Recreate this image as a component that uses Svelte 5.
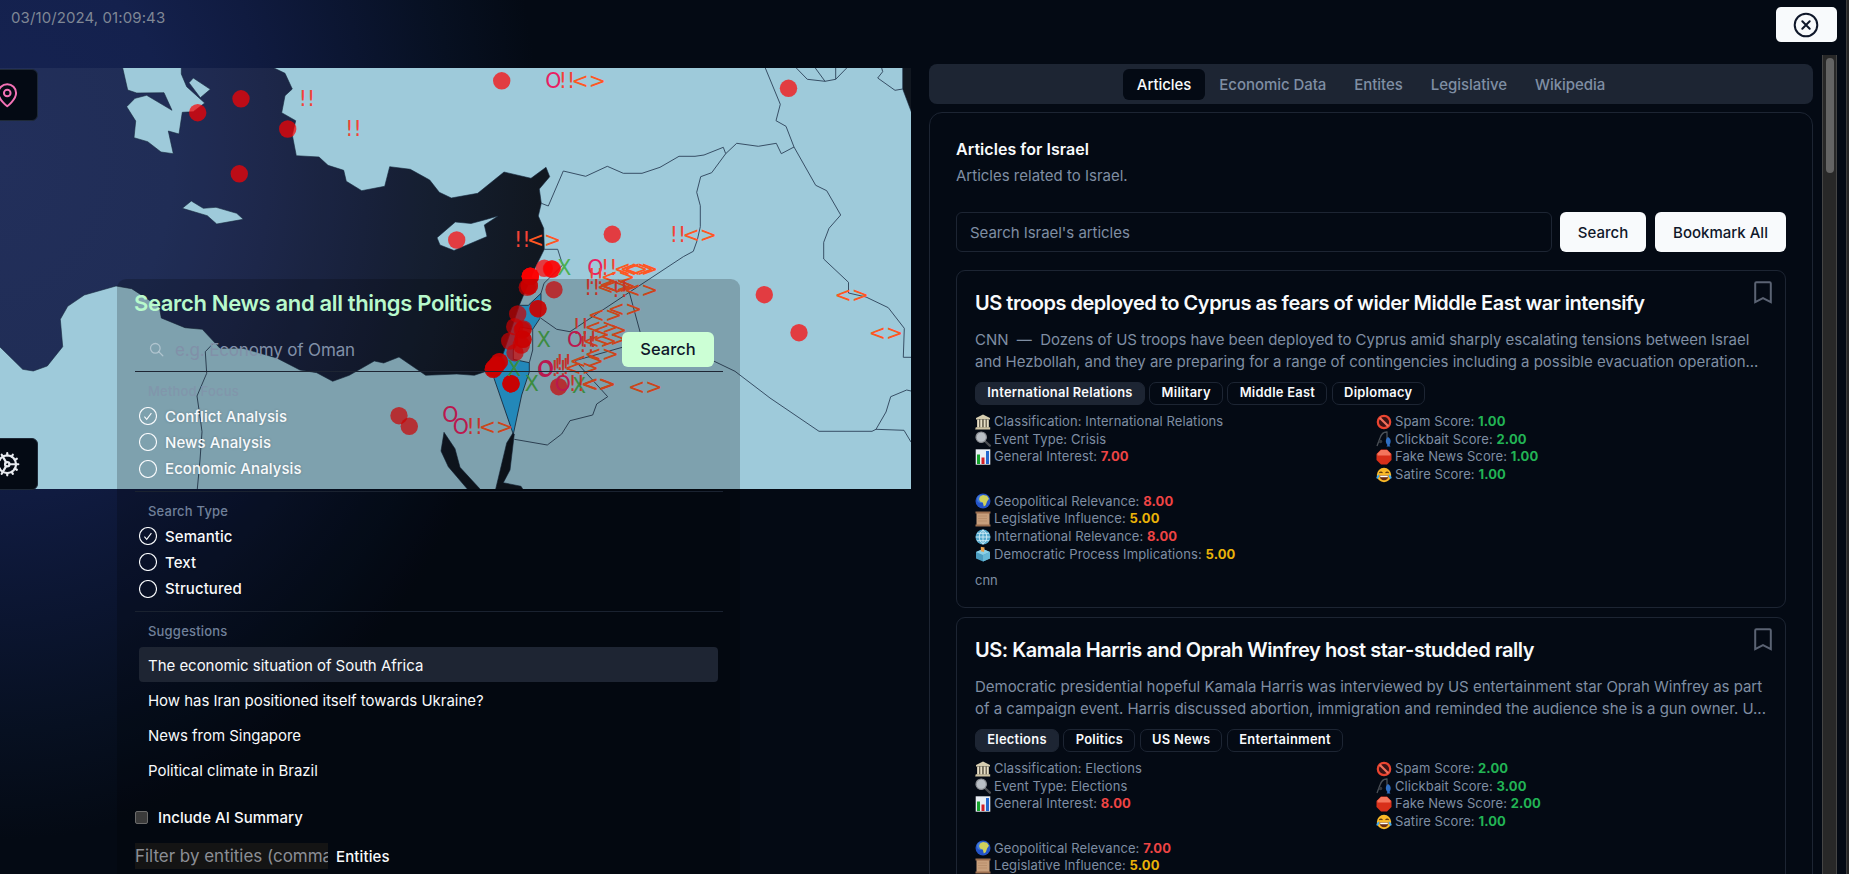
<script>
  const tabs = ['Articles', 'Economic Data', 'Entites', 'Legislative', 'Wikipedia'];
  const methods = ['Conflict Analysis', 'News Analysis', 'Economic Analysis'];
  const types = ['Semantic', 'Text', 'Structured'];
  const suggestions = [
    'The economic situation of South Africa',
    'How has Iran positioned itself towards Ukraine?',
    'News from Singapore',
    'Political climate in Brazil'
  ];

  const articles = [
    {
      title: 'US troops deployed to Cyprus as fears of wider Middle East war intensify',
      lines: [
        'CNN \u00a0—\u00a0 Dozens of US troops have been deployed to Cyprus amid sharply escalating tensions between Israel',
        'and Hezbollah, and they are preparing for a range of contingencies including a possible evacuation operation...'
      ],
      tags: ['International Relations', 'Military', 'Middle East', 'Diplomacy'],
      left: [['bank', 'Classification: International Relations'], ['lens', 'Event Type: Crisis'], ['chart', 'General Interest:', '7.00', 'red']],
      right: [['no', 'Spam Score:', '1.00', 'green'], ['rod', 'Clickbait Score:', '2.00', 'green'], ['stop', 'Fake News Score:', '1.00', 'green'], ['joy', 'Satire Score:', '1.00', 'green']],
      impact: [['earth', 'Geopolitical Relevance:', '8.00', 'red'], ['scroll', 'Legislative Influence:', '5.00', 'amber'], ['globe', 'International Relevance:', '8.00', 'red'], ['ballot', 'Democratic Process Implications:', '5.00', 'amber']],
      source: 'cnn'
    },
    {
      title: 'US: Kamala Harris and Oprah Winfrey host star-studded rally',
      lines: [
        'Democratic presidential hopeful Kamala Harris was interviewed by US entertainment star Oprah Winfrey as part',
        'of a campaign event. Harris discussed abortion, immigration and reminded the audience she is a gun owner. U...'
      ],
      tags: ['Elections', 'Politics', 'US News', 'Entertainment'],
      left: [['bank', 'Classification: Elections'], ['lens', 'Event Type: Elections'], ['chart', 'General Interest:', '8.00', 'red']],
      right: [['no', 'Spam Score:', '2.00', 'green'], ['rod', 'Clickbait Score:', '3.00', 'green'], ['stop', 'Fake News Score:', '2.00', 'green'], ['joy', 'Satire Score:', '1.00', 'green']],
      impact: [['earth', 'Geopolitical Relevance:', '7.00', 'red'], ['scroll', 'Legislative Influence:', '5.00', 'amber']],
      source: ''
    }
  ];

  const dots = [
    [241, 98.8], [197.7, 112.7], [287.7, 129], [239.3, 173.8], [501.7, 80.8], [788.5, 88.3], [456.7, 240], [612.3, 234.3],
    [544.3, 268.3], [552.3, 269], [551.5, 269], [530.3, 276.3], [530.3, 276.3], [530.3, 276.3], [529.3, 286], [529.3, 286], [527.3, 287.3],
    [554, 289.7], [538, 308.7], [538, 308.7], [517.7, 314], [514.7, 326.7], [523.3, 329], [522.3, 330], [509.7, 341], [523, 339.3], [523, 339.3],
    [521.3, 345], [515, 352.7], [499.3, 361.7], [499.3, 361.7], [496.7, 365], [496.7, 365], [494, 368], [494, 368], [493.3, 369.3], [493.3, 369.3],
    [511, 383.7], [511, 383.7], [511, 383.7], [558.7, 386.7], [399, 415.7], [409.3, 426.3], [764.3, 294.7], [799, 332.7]
  ];

  const marks = [
    ['!!', 307, 106], ['!!', 353.5, 136], ['!!', 456, 54.5],
    ['O', 553.3, 88.3], ['!!', 567, 88], ['<>', 588.7, 88],
    ['!!', 522.3, 247], ['<>', 544, 247], ['!!', 678, 242], ['<>', 699.7, 242],
    ['X', 564.3, 275.3], ['O', 595.3, 275.3], ['!!', 609.3, 275.3], ['<>', 631, 276], ['<>', 637, 276], ['<>', 641, 276],
    ['!!', 596, 284], ['<>', 618, 284], ['!!', 592.3, 295], ['<>', 614, 294], ['<>', 616, 292], ['<>', 619, 293], ['!!', 620, 297], ['<>', 641, 297],
    ['<>', 625, 316], ['<>', 605, 322], ['!!', 580.7, 334], ['<>', 601.7, 334], ['<>', 610, 337], ['<>', 610, 346], ['<>', 600, 348],
    ['O', 575, 347], ['!!', 589, 347], ['!!', 587, 352], ['<>', 601.7, 361], ['!!', 564, 369.7], ['!!', 561.7, 374], ['!!', 559, 376],
    ['<>', 586.7, 368], ['<>', 581.7, 375], ['O', 545, 377], ['O', 546, 376], ['X', 543.7, 346.7], ['X', 514.3, 375.7], ['X', 531.7, 391],
    ['X', 579, 393], ['O', 562.7, 391], ['!!', 576.7, 391], ['<>', 598, 391], ['<>', 599, 391], ['<>', 645.3, 394],
    ['O', 450.3, 422.3], ['O', 460.7, 433.7], ['!!', 474.7, 433.7], ['<>', 496, 433.7], ['<>', 851.7, 302], ['<>', 886, 340]
  ];
  const markColor = { '!!': '#f44336', O: '#e91e63', '<>': '#ff5722', X: '#4caf50' };
</script>

{#snippet icon(kind)}
  <svg class="emo" viewBox="0 0 16 16">
    {#if kind === 'bank'}
      <path d="M8 .5 15 4v1.5H1V4z" fill="#d6cdb0" /><path d="M2 5.5h12v8H2z" fill="#5b5443" />
      <path d="M2.2 5.5h1.9v8H2.2zM5.3 5.5h1.9v8H5.3zM8.7 5.5h1.9v8H8.7zM11.8 5.5h1.9v8h-1.9z" fill="#e6dec6" /><path d="M.8 13.2h14.4v2.3H.2z" fill="#cfc4a4" />
    {:else if kind === 'lens'}
      <path d="m9.8 10 5 4.7" stroke="#4a4d52" stroke-width="2.4" stroke-linecap="round" /><circle cx="6.2" cy="6.2" r="5.2" fill="#b9bfc5" stroke="#8c8f94" stroke-width="1.2" />
    {:else if kind === 'chart'}
      <path d="M.7.3h14.6v15.4H.7z" fill="#e9eef5" /><path d="M2 5.5h3V15H2z" fill="#15a32c" /><path d="M6.5 8.500h3V15h-3z" fill="#d21f26" /><path d="M11 2h3v13h-3z" fill="#2467cf" />
    {:else if kind === 'earth'}
      <circle cx="8" cy="8" r="7.5" fill="#2454c8" /><circle cx="6" cy="6" r="4" fill="#5c9cf0" opacity=".5" /><path d="M5 3.500 8 2l4 .8 2 3-1.800 2.400-1.500 4-1.900 1.300-1-4L5 8.500 4 6z" fill="#cfd15c" />
    {:else if kind === 'scroll'}
      <path d="M1.500 1.800h13v12.800h-13z" fill="#c89f7c" /><path d="M.5.5h15v2H.5zM.5 13.500h15v2H.5z" fill="#9c6f4f" /><path d="M3 5h9M3 7.500h9M3 10h9" stroke="#b48a67" stroke-width=".7" />
    {:else if kind === 'globe'}
      <circle cx="8" cy="8" r="7.500" fill="#54a8cc" /><path d="M8 .8v14.400M.8 8h14.400M2 4.300h12M2 11.700h12M8 .8c-5 4-5 10.400 0 14.400M8 .8c5 4 5 10.400 0 14.400" fill="none" stroke="#d3eef8" stroke-width=".9" />
    {:else if kind === 'ballot'}
      <path d="m1 6 7-3 7 3v6.500L8 15.500l-7-3z" fill="#4a9cc0" /><path d="m1 6 7-3 7 3-7 3z" fill="#8bd0e6" /><path d="M8 9v6.500l7-3V6z" fill="#67b7d5" /><path d="m5.800.8 3.800.8L9 6 5.800 5.200z" fill="#e8a04c" />
    {:else if kind === 'no'}
      <circle cx="8" cy="8" r="6.200" fill="#3a1214" stroke="#ea4430" stroke-width="2.200" /><path d="m3.700 3.700 8.600 8.600" stroke="#f0705c" stroke-width="2.200" />
    {:else if kind === 'rod'}
      <path d="M1 15 4 7C5.500 2.500 8 .8 11 1v7" fill="none" stroke="#4b5158" stroke-width="1.300" /><circle cx="4.500" cy="10.500" r="1.800" fill="#33383f" /><path d="M12 6c3 1.500 3.500 5 1.500 8l1 1.500h-4l1-1.500C9 11 9.500 8 12 6z" fill="#2f6fc4" />
    {:else if kind === 'stop'}
      <path d="M5 .5h6L15.500 5v6L11 15.500H5L.5 11V5z" fill="#d8301a" /><path d="M5 1h6l3.500 3.500v2h-13v-2z" fill="#f4755c" />
    {:else if kind === 'joy'}
      <circle cx="8" cy="8" r="7.200" fill="#f9b928" /><path d="M3.300 5.800q1.700-1.500 3.200 0M9.500 5.800q1.700-1.500 3.200 0" fill="none" stroke="#5c3510" stroke-width="1.100" /><path d="M3.500 8.500h9q-.5 4.800-4.500 4.800T3.500 8.500z" fill="#6b2d12" /><path d="M4.200 8.700h7.600v1.500H4.200z" fill="#fff" /><path d="M.4 10q1.500-3 2.900-2.500.3 3-1.400 3.900T.4 10zM15.600 10q-1.500-3-2.900-2.500-.3 3 1.400 3.900t1.500-1.400z" fill="#44a9ec" />
    {/if}
  </svg>
{/snippet}

{#snippet metric(m)}
  <li>{@render icon(m[0])}<span class="mt">{m[1]} {#if m[2]}<b class={m[3]}>{m[2]}</b>{/if}</span></li>
{/snippet}

{#snippet radio(label, on)}
  <div class="radio">
    <svg viewBox="0 0 18 18"><circle cx="9" cy="9" r="8.500" />{#if on}<path d="m5.400 9.600 2.300 2.700 4.700-6.100" />{/if}</svg>
    <span>{label}</span>
  </div>
{/snippet}

<div class="app">
  <header>
    <time>03/10/2024, 01:09:43</time>
    <button class="close" aria-label="Close">
      <svg viewBox="0 0 26 26"><circle cx="13" cy="13" r="11.300" /><path d="m9.300 9.300 7.400 7.400m0-7.400-7.400 7.400" /></svg>
    </button>
  </header>

  <main>
    <section class="left">
      <svg class="map" viewBox="0 68 911 421">
        <g class="land">
          <path d="M274 68 285 73.300 292.300 89 285 95.700 281.700 112.700 295.700 120.700 292.300 135 296.300 155.700 319 157 328 165.300 343.700 170.300 346.300 181.300 361.700 190.700 384.700 186.300 389.700 166.700 410.300 169.300 429.700 180 439.300 192.300 451.300 198 477.700 193.300 504 172 531 178.300 546 167.300 549.700 176.700 539.300 189 541.300 203.300 538.300 216 543.700 228.300 544.300 249.300 535 268 519.300 305.300 503.300 353.300 494 371 485 371.700 474.300 375.300 456.700 374 425.700 375.300 399 357 383.700 363 374.300 361 349.300 375.300 332.700 381.300 316.700 372.700 300 370 276.700 358 243 348.300 220 348.300 202.300 329.300 185 327.700 161.300 318 159.300 306.700 131.700 288.700 116 286 84.300 295 67.700 306.300 60.300 319.300 62.700 346.700 47.300 366 33.300 371 22.700 369.300 0 347-3 344V492H470L467.300 489 448.300 466.700 441 451 444 432.300 455 448.700 460 467.300 480 489 482 492H495L495.700 489 506.700 443 512.700 433.300 514.300 434 510 470 503.300 482.700 521 486.300 522.700 489 523 492H914V119L902.700 89V65H270Z" />
          <path d="M122 65 127.700 90 136.700 93 164 92.700 172 110.300 146.700 95.300 135 98.300 126.700 106.700 135.700 121 134 137.700 147.700 141.700 161 152 173.300 153.700 168.300 131 179 134 182.300 112.300 193.300 111.700 204.700 103 186.700 86.700 181.300 74V65Z" />
          <path d="M193.300 78 210.300 89.300 200.300 97.700 189 82.700Z" />
          <path d="M182.300 208.300 191.300 201 203.300 208.300 216 207.300 236.700 213.300 243.300 219.300 216.700 224 207.300 215.700Z" />
          <path d="M437 237.700 455.300 222 471 223.500 486 219.500 498 216 484.300 225 487 236.500 454 250.500 440 245Z" />
        </g>
        <path class="israel" d="M519.300 305.300H528.300L541 293.300V309L540 318.300 532.700 329.300 520 327 513.300 350V359.300L529.300 362.700V372L521.700 395 513.300 434.300 494 378.300 503.300 353.300Z" />
        <g class="borders">
          <path d="M541.300 203.300 548.300 206 563.300 171 585.700 176.300 607.300 166.300 623.300 173.300H642L660 167.300 679 156.300H695L704 155 723.300 147.300 725.700 153.700 736.700 143.300 758.300 146.300 776.300 143.300 781.300 153.700 794 147 786 126.300 776 120.700 780.300 104.300 765.300 68" />
          <path d="M725.700 153.700 711.700 172.700 700.700 176.700 696.700 192.300 700.300 205.700V226.700L697.300 240 693.300 251.300 683.300 256.700 629.300 292.300 570 331.700 556.700 329.300 541 318.300M544.300 249.300H557.700L562.700 265 544 283.300 541 293.300" />
          <path d="M794 147 815.700 185.300 826.700 190.700 840.700 215 829 228.300 823.700 242.300V259L848.500 282.300V293L866 297 888.300 307.700 904.300 328.300 903.300 357.300H911" />
          <path d="M629.300 292.300 640 331.700 641 342 575 360.700 607.700 396.700 596.700 404 592.700 415 570 420.700 561.700 434 547.300 445 514.300 439.300M641 342 690 350 713 360.700 735 371.300 770 398 819 431.300H872L876 429.300 904 430.300 911 442M876 429.300 886 412 890.700 396.700 906.700 390 911 391" />
          <path d="M532.700 329.300V350L529.300 362.700M213.300 343.300 205.300 351.700 206.700 373.300 197 396 200 416.700 202 431.700 200 460 197.300 489" />
          <path d="M796.300 68 807.300 79.300 825 81.300 835.700 79.300 846.700 68M815.300 68 825 81.300M835.700 68V79.300M881.700 68 882.700 71.700 877.700 78 895 90.300 902.700 89" />
        </g>
        {#each dots as [x, y]}<circle cx={x} cy={y} r="8.700" fill="#f00" opacity=".7" />{/each}
        {#each marks as [t, x, y]}<text {x} {y} fill={markColor[t]}>{t}</text>{/each}
      </svg>

      <button class="side pin" aria-label="Location">
        <svg viewBox="0 0 24 24"><path d="M20 10c0 6-8 12-8 12s-8-6-8-12a8 8 0 0 1 16 0Z" /><circle cx="12" cy="10" r="3" /></svg>
      </button>
      <button class="side gear" aria-label="Settings">
        <svg viewBox="0 0 24 24"><path d="M12 20a8 8 0 1 0 0-16 8 8 0 0 0 0 16Z" /><path d="M12 14a2 2 0 1 0 0-4 2 2 0 0 0 0 4Z" /><path d="M12 2v2M12 22v-2m5 .66-1-1.730M11 10.270 7 3.370M20.660 17l-1.730-1M3.340 7l1.730 1M14 12h8M2 12h2M20.660 7l-1.730 1M3.340 17l1.730-1M17 3.340l-1 1.730M11 13.730l-4 6.930" /></svg>
      </button>

      <div class="search">
        <h1>Search News and all things Politics</h1>
        <div class="query">
          <svg viewBox="0 0 15 15"><circle cx="6.300" cy="6.300" r="4.800" /><path d="m9.900 9.900 3.900 3.900" /></svg>
          <span>e.g. Economy of Oman</span>
          <button>Search</button>
        </div>
        <div class="group">
          <h2 class="faint">Method Focus</h2>
          {#each methods as m, i}{@render radio(m, i === 0)}{/each}
        </div>
        <div class="group">
          <h2>Search Type</h2>
          {#each types as m, i}{@render radio(m, i === 0)}{/each}
        </div>
        <div class="group sugg">
          <h2>Suggestions</h2>
          {#each suggestions as s, i}<div class="item" class:sel={i === 0}><span>{s}</span></div>{/each}
        </div>
        <div class="summary"><i></i><span>Include AI Summary</span></div>
        <div class="entities"><div class="filter"><span>Filter by entities (comma separated)</span></div><span class="elabel">Entities</span></div>
      </div>
    </section>

    <section class="right">
      <nav>
        {#each tabs as t, i}<div class="tab" class:on={i === 0}><span>{t}</span></div>{/each}
      </nav>
      <div class="panel">
        <h3>Articles for Israel</h3>
        <p class="sub"><span>Articles related to Israel.</span></p>
        <div class="bar">
          <div class="field"><span>Search Israel's articles</span></div>
          <button class="b1">Search</button>
          <button class="b2">Bookmark All</button>
        </div>
        {#each articles as a}
          <article>
            <svg class="mark" viewBox="0 0 18 23"><path d="M1.200 2.400q0-1.200 1.200-1.200h13.200q1.200 0 1.200 1.200v18.800L9 17.200l-7.800 4z" /></svg>
            <h4>{a.title}</h4>
            <div class="desc">{#each a.lines as l}<div><span>{l}</span></div>{/each}</div>
            <div class="tags">{#each a.tags as t, i}<span class:fill={i === 0}>{t}</span>{/each}</div>
            <div class="metrics">
              <ul>{#each a.left as m}{@render metric(m)}{/each}</ul>
              <ul>{#each a.right as m}{@render metric(m)}{/each}</ul>
              <ul>{#each a.impact as m}{@render metric(m)}{/each}</ul>
            </div>
            <div class="source">{a.source}</div>
          </article>
        {/each}
      </div>
    </section>
    <div class="track"><i></i></div>
  </main>
  <div class="edge"></div>
</div>

<style>
  :global(body) { margin: 0; background: #040a14; overflow: hidden; }
  .app {
    position: relative; width: 1849px; height: 874px; overflow: hidden; box-sizing: border-box;
    font-family: Inter, "Liberation Sans", sans-serif; color: #f8fafc; font-size: 14px;
    background:
      radial-gradient(ellipse 540px 680px at 0 160px, #162352 0%, #14214d 32%, #101b40 50%, #0b1530 68%, #071021 84%, #040a14 100%), #040a14;
  }
  h1, h2, h3, h4, p, ul { margin: 0; padding: 0; list-style: none; font-weight: 600; }
  button { border: 0; padding: 0; font-family: inherit; display: flex; align-items: center; justify-content: center; }
  header { height: 55px; display: flex; justify-content: space-between; padding: 7px 12px 0 11px; box-sizing: border-box; }
  time { font-size: 15px; color: #7f8795; line-height: 22px; letter-spacing: .1px; }
  .close { width: 61px; height: 35px; border-radius: 5px; background: #f8fafc; }
  .close svg { width: 26px; height: 26px; margin-right: 1px; fill: none; stroke: #0f172a; stroke-width: 2; stroke-linecap: round; }
  main { display: flex; height: 819px; }

  .left { position: relative; width: 911px; padding-top: 13px; margin-right: 18px; flex: none; }
  .map { display: block; width: 911px; height: 421px; background: rgba(255, 255, 255, .055); }
  .land path { fill: #9ecada; stroke: #16263c; stroke-width: .6; }
  .israel { fill: #2cabe8; stroke: #16263c; stroke-width: .8; }
  .borders path { fill: none; stroke: #2b4158; stroke-width: .9; }
  .map text { font: 400 20.500px "DejaVu Sans", sans-serif; text-anchor: middle; }
  .side { position: absolute; left: -24px; width: 60px; height: 50px; border: 1px solid #1e2937; border-radius: 6px; background: #040a14; box-sizing: content-box; }
  .pin { top: 14px; }
  .gear { top: 383px; }
  .side svg { width: 26.500px; height: 26.500px; fill: none; stroke: #e8ebf0; stroke-width: 2; stroke-linecap: round; stroke-linejoin: round; }
  .pin svg { stroke: #f472b6; stroke-width: 1.800; }

  .search { position: absolute; left: 117px; top: 224px; width: 623px; height: 620px; box-sizing: border-box; padding: 11px 17px 0 18px; border-radius: 9px; background: rgba(0, 0, 0, .2); }
  h1 { font-size: 22px; line-height: 27px; color: #b8f9cc; letter-spacing: -.35px; white-space: nowrap; margin-left: -1px; }
  .query { display: flex; align-items: center; height: 43px; margin-top: 11px; padding: 0 9px 0 14px; border-bottom: 1px solid #1e2533; }
  .query svg { width: 15px; height: 15px; fill: none; stroke: rgba(226, 232, 240, .5); stroke-width: 1.300; stroke-linecap: round; }
  .query span { flex: 1; margin-left: 11px; font-size: 17px; color: #8190a8; letter-spacing: -.15px; }
  .query button { width: 92px; height: 35px; margin-top: -1px; border-radius: 6px; background: #ccffd5; color: #0f172a; font-size: 16.500px; font-weight: 500; }
  .group { height: 119px; border-bottom: 1px solid #1a2230; }
  h2 { font-size: 13px; font-weight: 500; line-height: 17px; padding: 11px 0 3px 13px; color: #70809a; letter-spacing: .2px; }
  h2.faint { color: #8196ab; }
  .radio { display: flex; align-items: center; height: 26.300px; padding-left: 4px; gap: 8px; font-size: 15px; font-weight: 500; letter-spacing: .08px; text-shadow: 0 0 3px rgba(0, 0, 0, .2); }
  .radio svg { width: 18px; height: 18px; fill: none; stroke: #f8fafc; stroke-width: 1.100; }
  .sugg { height: 176px; border: 0; }
  .item { height: 35px; margin: 0 5px 0 4px; padding-left: 9px; line-height: 37px; font-size: 15px; letter-spacing: -.03px; border-radius: 4px; }
  .sugg h2 { padding-bottom: 7px; }
  .item.sel { background: #1e2533; }
  .summary { display: flex; align-items: center; gap: 10px; height: 20px; margin-top: 19px; font-size: 15px; font-weight: 500; letter-spacing: .05px; }
  .summary i { width: 11px; height: 11px; border: 1px solid #6b6b6b; border-radius: 2px; background: #3b3b3b; }
  .entities { display: flex; align-items: center; gap: 8px; margin-top: 16px; height: 26px; font-size: 15px; font-weight: 500; letter-spacing: .12px; }
  .filter { width: 193px; height: 26px; line-height: 26px; overflow: hidden; white-space: nowrap; background: #141414; color: #8b8e95; font-size: 17px; letter-spacing: -.02px; font-weight: 400; }

  .right { width: 884px; flex: none; padding-top: 9px; height: 810px; overflow: hidden; }
  nav { display: flex; justify-content: center; align-items: center; height: 40px; background: #1d2533; border-radius: 8px; }
  .tab { height: 31px; line-height: 31px; padding: 0 14px; border-radius: 6px; font-size: 15px; font-weight: 500; letter-spacing: -.05px; color: #7f8ea3; }
  .tab.on { background: #040a14; color: #f8fafc; }
  .panel { margin-top: 8px; height: 900px; border: 1px solid #1d2533; border-radius: 13px; padding: 25px 26px 0; box-sizing: border-box; background: #040a14; }
  h3 { font-size: 16px; line-height: 22px; letter-spacing: .05px; }
  .sub { font-size: 15px; font-weight: 400; line-height: 22px; margin-top: 5px; color: #7f8ea3; }
  .bar { display: flex; height: 40px; margin: 25px 0 18px; }
  .field { width: 596px; border: 1px solid #1d2533; border-radius: 6px; line-height: 40px; box-sizing: border-box; padding-left: 13px; font-size: 15px; letter-spacing: -.04px; color: #7f8ea3; }
  .bar button { background: #f8fafc; color: #0f172a; border-radius: 6px; font-size: 15px; font-weight: 500; }
  .b1 { width: 86px; margin: 0 9px 0 8px; }
  .b2 { width: 131px; }
  article { position: relative; height: 338px; box-sizing: border-box; border: 1px solid #1d2533; border-radius: 9px; padding: 17px 18px; margin-bottom: 9px; }
  .mark { position: absolute; right: 13px; top: 10px; width: 18px; height: 23px; fill: none; stroke: #5b6373; stroke-width: 2; }
  h4 { font-size: 20px; line-height: 30px; letter-spacing: -.47px; white-space: nowrap; }
  .desc { margin-top: 11px; color: #7f8ea3; font-size: 15px; line-height: 22.400px; letter-spacing: -.025px; white-space: nowrap; }
  .tags { display: flex; gap: 4.500px; margin-top: 8px; }
  .tags span { height: 21px; line-height: 20px; border: 1px solid #1d2533; border-radius: 7px; padding: 0 11.200px; font-size: 12.900px; font-weight: 600; letter-spacing: .28px; }
  .tags .fill { background: #1d2533; }
  .metrics { display: grid; grid-template-columns: 401px 1fr; row-gap: 9px; margin-top: 8px; font-size: 13px; letter-spacing: .09px; color: #7f8ea3; }
  .metrics li { display: flex; align-items: center; height: 17.700px; line-height: 17.700px; font-weight: 400; gap: 3px; white-space: nowrap; }
  .emo { width: 16px; height: 16px; }
  b { font-weight: 700; letter-spacing: .1px; }
  .red { color: #ef4444; }
  .green { color: #22b455; }
  .amber { color: #eab308; }
  .source { margin-top: 8px; font-size: 13px; line-height: 18px; color: #7f8ea3; }
  .track { width: 13px; margin-left: 9px; border: solid #454545; border-width: 0 1px; background: #282828; padding-top: 3px; }
  .track i { display: block; width: 8px; height: 115px; margin-left: 3px; border-radius: 4px; background: #646464; }
  .edge { position: absolute; right: 0; top: 0; width: 2px; height: 874px; border-left: 1px solid #3d3d3d; background: #262626; }
</style>
